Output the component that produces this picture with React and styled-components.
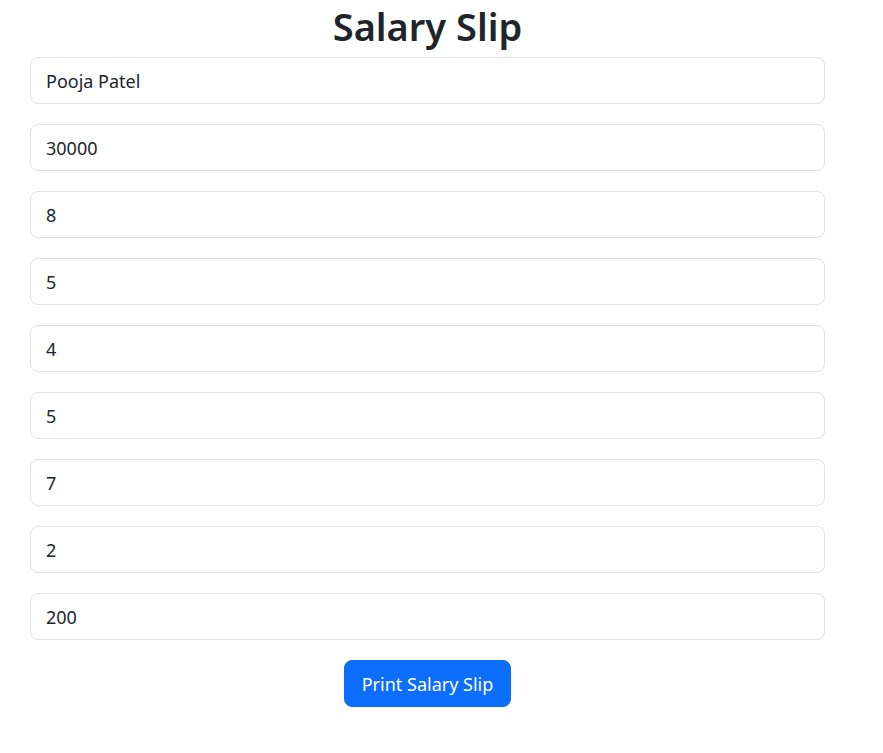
import React from "react";
import styled, { createGlobalStyle } from "styled-components";

const Global = createGlobalStyle`
  html, body { margin: 0; padding: 0; background: #fff; }
  body { font-family: "Noto Sans", "Open Sans", sans-serif; color: #212529; }
  * { box-sizing: border-box; }
`;

const Page = styled.div`
  width: 795px;
  margin-left: 30px;
  padding-top: 2px;
  display: flex;
  flex-direction: column;
  align-items: stretch;
`;

const Title = styled.h1`
  margin: 0 0 7px;
  text-align: center;
  font-size: 38px;
  line-height: 48px;
  font-weight: 600;
  color: #212529;
`;

const Fields = styled.div`
  display: flex;
  flex-direction: column;
  gap: 20px;
`;

const Input = styled.input`
  display: block;
  width: 100%;
  height: 47px;
  padding: 0 15px;
  font-family: inherit;
  font-size: 18px;
  color: #212529;
  background: #fff;
  border: 1px solid #dee2e6;
  border-radius: 8px;
  outline: none;
`;

const Actions = styled.div`
  display: flex;
  justify-content: center;
  margin-top: 20px;
`;

const Button = styled.button`
  height: 47px;
  padding: 0 17px;
  font-family: inherit;
  font-size: 18px;
  color: #fff;
  background: #0d6efd;
  border: 1px solid #0d6efd;
  border-radius: 8px;
  cursor: pointer;
`;

const values = ["Pooja Patel", "30000", "8", "5", "4", "5", "7", "2", "200"];

export default function App() {
  return (
    <>
      <Global />
      <Page>
        <Title>Salary Slip</Title>
        <Fields>
          {values.map((v, i) => (
            <Input key={i} defaultValue={v} />
          ))}
        </Fields>
        <Actions>
          <Button>Print Salary Slip</Button>
        </Actions>
      </Page>
    </>
  );
}
